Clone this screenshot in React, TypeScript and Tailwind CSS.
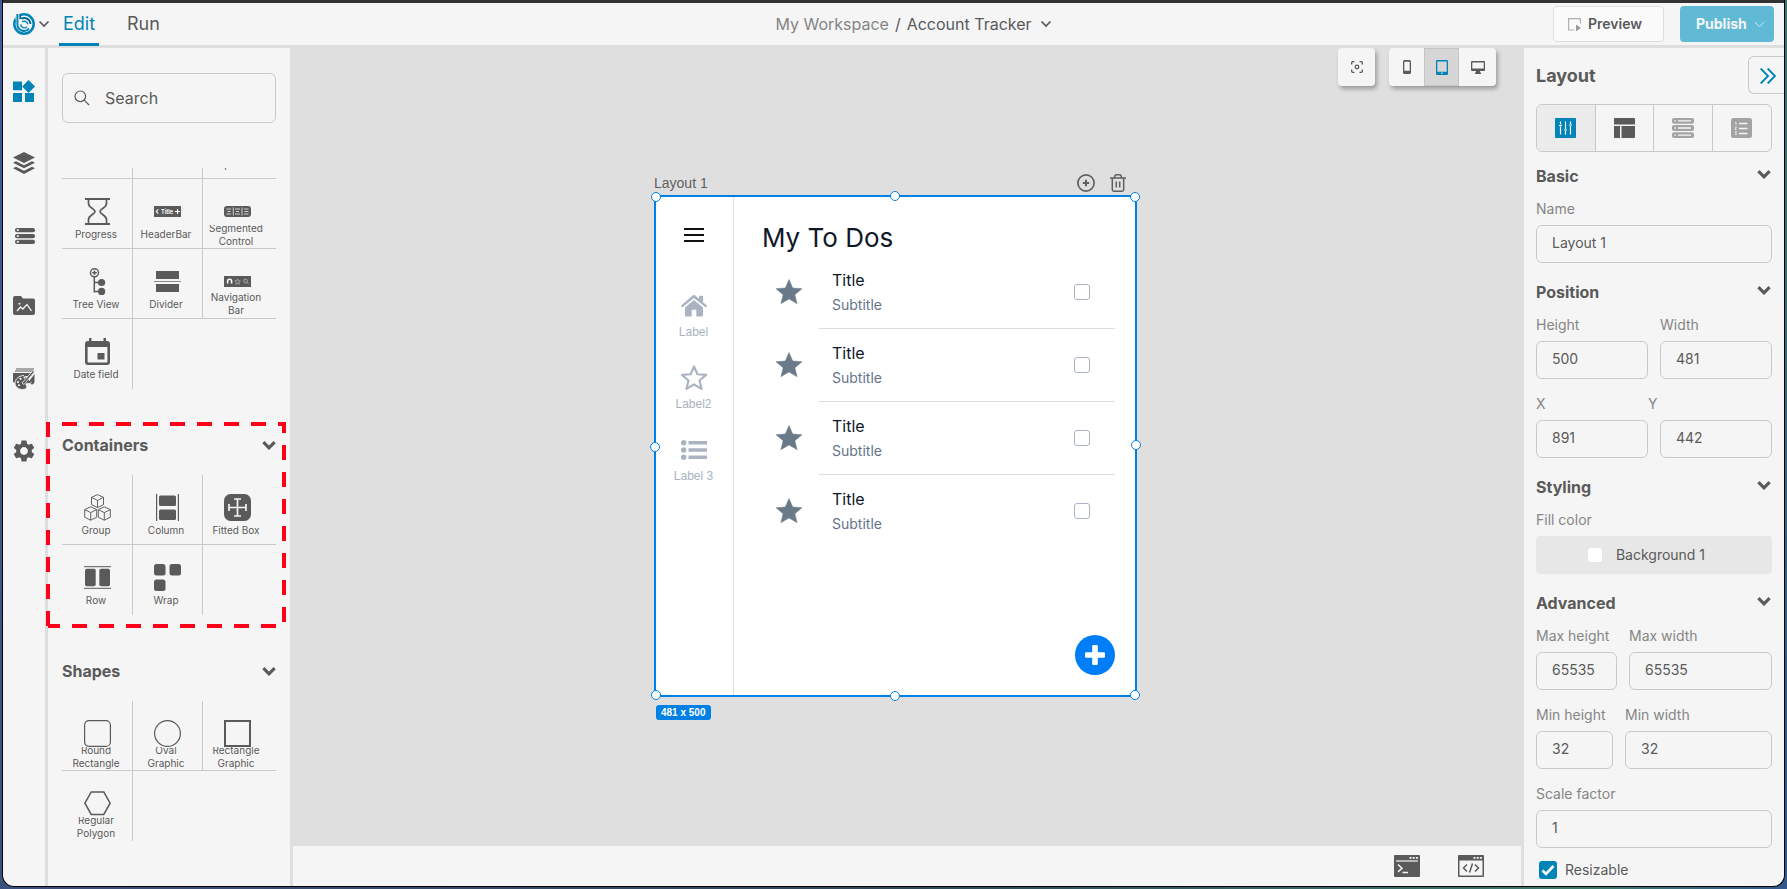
import type { ReactNode } from "react";
import { MdSettings } from "react-icons/md";

const INK = "#5a5a5a";

function BoldChevron() {
  return (
    <svg width="14" height="10" viewBox="0 0 14 10" fill="none" stroke={INK} strokeWidth="3.2" aria-hidden="true">
      <path d="M1.4 2.200 7 7.800l5.600-5.600" />
    </svg>
  );
}

function ThinChevron({ color = INK }: { color?: string }) {
  return (
    <svg width="12" height="8" viewBox="0 0 12 8" fill="none" stroke={color} strokeWidth="1.7" aria-hidden="true">
      <path d="M1.500 1.500 6 6l4.500-4.500" />
    </svg>
  );
}

function Glyph({ children }: { children: ReactNode }) {
  return (
    <svg width="27" height="27" viewBox="0 0 27 27" fill={INK} aria-hidden="true">
      {children}
    </svg>
  );
}

const glyphs: Record<string, ReactNode> = {
  progress: (
    <g fill="none" stroke={INK} strokeWidth="2">
      <path d="M1 1h25M1 26h25" />
      <path
        d="M4.5 2v3.5c0 4.500 6.500 5.200 6.500 8s-6.500 3.500-6.500 8V25M22.500 2v3.500c0 4.500-6.500 5.200-6.500 8s6.500 3.500 6.500 8V25"
        strokeWidth="1.700"
      />
    </g>
  ),
  header: (
    <>
      <rect y="8" width="27" height="11" />
      <path d="M4.300 11.300 2.200 13.500l2.100 2.200M21 13.500h5M23.500 11v5" stroke="#fff" fill="none" strokeWidth="1.100" />
      <text x="7" y="15.600" fontSize="5.500" fontWeight="700" fill="#fff">
        Title
      </text>
    </>
  ),
  segmented: (
    <>
      <rect y="8" width="27" height="11" rx="3" />
      <path
        d="M2.500 11h4.500M3.500 13.500h3M2.500 16h4.500M11 11h5M12 13.500h3M11 16h5M20 11h4.500M20.500 13.500h4M20 16h4.500M9.300 9.500v8M18 9.500v8"
        stroke="#ddd"
        strokeWidth=".9"
      />
    </>
  ),
  tree: (
    <>
      <circle cx="10.500" cy="4.800" r="4" fill="#fff" stroke={INK} strokeWidth="1.500" />
      <path d="M10.500 2.500v4.600M8.200 4.800h4.600M10.300 9v15.500M10.300 14.500H16M10.300 23.600H16" stroke={INK} strokeWidth="1.500" />
      <circle cx="17.600" cy="14.500" r="3.600" />
      <circle cx="17.600" cy="23.400" r="3.600" />
    </>
  ),
  divider: (
    <>
      <path d="M2 3h23v8H2zM2 16h23v8H2z" />
      <path d="M0 13h27v1H0z" opacity=".7" />
    </>
  ),
  navbar: (
    <>
      <rect y="8" width="27" height="11" />
      <path d="M3.600 15.500v-2.300a2 2 0 0 1 4 0v2.300" fill="none" stroke="#fff" strokeWidth="1.500" />
      <path d="m13.600 11 .8 1.800 2 .2-1.500 1.300.4 2-1.700-1-1.700 1 .4-2-1.500-1.300 2-.2z" fill="none" stroke="#ccc" strokeWidth=".6" />
      <circle cx="21.500" cy="13" r="1.800" fill="none" stroke="#ccc" strokeWidth=".7" />
      <path d="m22.800 14.300 1.800 1.800" stroke="#ccc" strokeWidth=".8" />
    </>
  ),
  date: (
    <>
      <path
        fillRule="evenodd"
        d="M5 0h2.500v3h12V0H22v3h1a3 3 0 0 1 3 3v18a3 3 0 0 1-3 3H4a3 3 0 0 1-3-3V6a3 3 0 0 1 3-3h1zM3.600 9v14.500c0 .6.300.9.900.9h18c.6 0 .9-.3.900-.9V9z"
      />
      <rect x="13.500" y="15" width="7" height="6.500" />
    </>
  ),
  group: (
    <g fill="none" stroke={INK} strokeWidth=".95" strokeLinejoin="round">
      <path d="m13.500.6 6 2.800v7.200l-6 3-6-3V3.400zM7.500 3.400l6 3 6-3M13.500 6.400v7.200" />
      <path d="m6.700 12.800 6 2.800v7.600l-6 3-6-3v-7.600zM.7 15.600l6 3 6-3M6.700 18.600v7.600" />
      <path d="m20.300 12.800 6 2.800v7.600l-6 3-6-3v-7.600zM14.300 15.600l6 3 6-3M20.300 18.600v7.600" />
    </g>
  ),
  column: (
    <>
      <path d="M2 0h1.200v27H2zM23.800 0H25v27h-1.200z" />
      <rect x="5" y="1.500" width="17" height="10.500" rx="1.500" />
      <rect x="5" y="15.500" width="17" height="10.500" rx="1.500" />
    </>
  ),
  fitted: (
    <>
      <rect width="27" height="27" rx="6.500" />
      <path d="M13.500 4.500v18M4.500 13.500h18M10 5h7M10 22h7M5 10v7M22 10v7" stroke="#f5f5f5" strokeWidth="1.700" />
    </>
  ),
  row: (
    <>
      <path d="M0 2h27v1.200H0zM0 23.800h27V25H0z" opacity=".8" />
      <rect x="1" y="4.800" width="10.700" height="17.500" rx="1.800" />
      <rect x="15.300" y="4.800" width="10.700" height="17.500" rx="1.800" />
    </>
  ),
  wrap: (
    <>
      <rect width="11.500" height="11.500" rx="2.500" />
      <rect x="15.500" width="11.500" height="11.500" rx="2.500" />
      <rect y="15.500" width="11.500" height="11.500" rx="2.500" />
    </>
  ),
  round: <rect x=".6" y=".6" width="25.800" height="25.800" rx="4.500" fill="none" stroke={INK} strokeWidth="1.200" />,
  oval: <circle cx="13.500" cy="13.500" r="12.900" fill="none" stroke={INK} strokeWidth="1.200" />,
  rect: <rect x="1" y="1" width="25" height="25" fill="none" stroke={INK} strokeWidth="2" />,
  polygon: <path d="M.9 13.200 7.200 2h12.600l6.300 11.200-6.300 11.200H7.200z" fill="none" stroke={INK} strokeWidth="1.500" />,
};

type Tool = { label: string; icon?: string; cut?: boolean };

const controls: Tool[] = [
  { label: "Checkbox" },
  { label: "Radio" },
  { label: "Spinner" },
  { label: "Progress", icon: "progress" },
  { label: "HeaderBar", icon: "header" },
  { label: "Segmented Control", icon: "segmented", cut: true },
  { label: "Tree View", icon: "tree" },
  { label: "Divider", icon: "divider" },
  { label: "Navigation Bar", icon: "navbar" },
  { label: "Date field", icon: "date" },
];

const containers: Tool[] = [
  { label: "Group", icon: "group" },
  { label: "Column", icon: "column" },
  { label: "Fitted Box", icon: "fitted" },
  { label: "Row", icon: "row" },
  { label: "Wrap", icon: "wrap" },
];

const shapes: Tool[] = [
  { label: "Round Rectangle", icon: "round", cut: true },
  { label: "Oval Graphic", icon: "oval", cut: true },
  { label: "Rectangle Graphic", icon: "rect", cut: true },
  { label: "Regular Polygon", icon: "polygon", cut: true },
];

function ToolGrid({ tools }: { tools: Tool[] }) {
  const rows: Tool[][] = [];
  for (let i = 0; i < tools.length; i += 3) rows.push(tools.slice(i, i + 3));
  return (
    <div>
      {rows.map((row, r) => (
        <div
          key={r}
          className={`grid h-[70px] grid-cols-[71px_70px_1fr] ${r < rows.length - 1 ? "border-b border-[#c9c9c9]" : ""}`}
        >
          {row.map((tool, c) => (
            <button key={tool.label} type="button" className={`flex items-start ${c < 2 ? "border-r border-[#c9c9c9]" : ""}`}>
              <span className={`flex flex-col items-center pt-[19px] ${c === 0 ? "w-[68px]" : "w-[66px]"}`}>
                <span className="h-[27px] pl-0.5">{tool.icon && <Glyph>{glyphs[tool.icon]}</Glyph>}</span>
                <span className={`flex h-[26px] w-[60px] items-center justify-center text-[10px] leading-[13px] ${tool.cut ? "-mt-[3px]" : "-mt-1"}`}>
                  <span className={tool.cut ? "[clip-path:inset(3px_0_0_0)]" : ""}>{tool.label}</span>
                </span>
              </span>
            </button>
          ))}
        </div>
      ))}
    </div>
  );
}

function PaletteSection({ title, tools }: { title: string; tools: Tool[] }) {
  return (
    <section className="mt-11">
      <h2 className="mb-[18px]">
        <button type="button" className="flex h-6 w-full items-center justify-between text-base font-bold">
          {title}
          <BoldChevron />
        </button>
      </h2>
      <ToolGrid tools={tools} />
    </section>
  );
}

function Logo() {
  return (
    <svg width="22" height="22" viewBox="0 0 22 22" fill="none" aria-hidden="true">
      <circle cx="11" cy="11" r="9.700" stroke="#0084b8" strokeWidth="2.500" />
      <path d="M2.500 0H8v7H2.500z" fill="#f5f5f5" />
      <path d="M4.400 1v10.300a6.600 6.600 0 0 0 11.600 4.300" stroke="#0084b8" strokeWidth="2" />
      <path d="M7.200.800V6" stroke="#006b96" strokeWidth="1.800" />
      <path d="M8.200 5.700c4.600-2 9 .7 9.300 5.300" stroke="#006b96" strokeWidth="1.800" />
      <path d="M9 8.700c3-1.300 5.300 0 5.800 2.600M7.600 11.500c.6 3.300 4.200 4.300 6.400 2.300" stroke="#0084b8" strokeWidth="1.400" />
    </svg>
  );
}

const railIcons: { name: string; art: ReactNode }[] = [
  {
    name: "Components",
    art: (
      <svg width="22" height="22" viewBox="0 0 22 22" fill="#0084b8">
        <path d="M0 1.500h9v8.800H0zM0 13h9v9H0zM12 13h9v9h-9zM15.500 0 22 6.500 15.500 13 9.200 6.500z" />
      </svg>
    ),
  },
  {
    name: "Layers",
    art: (
      <svg width="22" height="22" viewBox="0 0 22 22" fill={INK}>
        <path d="M11 0 22 5.500 11 11 0 5.500z" />
        <path d="m0 10.800 3-1.500 8 4 8-4 3 1.500-11 5.500z" />
        <path d="m0 16.300 3-1.500 8 4 8-4 3 1.500L11 22z" />
      </svg>
    ),
  },
  {
    name: "Data",
    art: (
      <svg width="22" height="18" viewBox="0 -2 22 18" fill={INK}>
        <rect x="2" width="20" height="4.300" rx="2" />
        <rect x="2" y="5.900" width="20" height="4.300" rx="2" />
        <rect x="2" y="11.700" width="20" height="4.300" rx="2" />
        <g fill="#f5f5f5">
          <circle cx="4.800" cy="2.100" r="1.100" />
          <circle cx="4.800" cy="8" r="1.100" />
          <circle cx="4.800" cy="13.800" r="1.100" />
        </g>
      </svg>
    ),
  },
  {
    name: "Media",
    art: (
      <svg width="22" height="22" viewBox="0 0 22 22" fill={INK}>
        <path d="M2 0h6l2 2.500h10a2 2 0 0 1 2 2V17a2 2 0 0 1-2 2H2a2 2 0 0 1-2-2V2a2 2 0 0 1 2-2z" />
        <path d="m4 15 3.500-4 2.300 2 4.200-4.500 4.500 6.500" fill="none" stroke="#f5f5f5" strokeWidth="1.300" />
        <circle cx="6.500" cy="7.700" r="1" fill="#f5f5f5" />
      </svg>
    ),
  },
  {
    name: "Themes",
    art: (
      <svg width="22" height="22" viewBox="0 0 22 22" fill={INK}>
        <path d="M3 1h18M2 3h18.500" stroke={INK} strokeWidth="1.100" />
        <path d="M0 5h19.500l-1 3H0zM0 8h6v9L0 14zM17 12l4.500-6v7c0 3-2 4-4 3z" />
        <path
          d="M11 7.500c-4.500 0-9 3.500-9 7.500s3.500 6.500 7.500 6.500c2.500 0 4.500-1 4.300-2.800-.2-1.500-1.300-1.700-.8-2.700.8-1.200 4 .5 5.500-1.500"
          stroke="#f5f5f5"
          strokeWidth=".9"
        />
        <path d="m9 15 11-12.500 1.500 1.200L11 16.500z" stroke="#f5f5f5" strokeWidth=".8" />
        <g fill="#f5f5f5">
          <circle cx="5" cy="14" r="1.100" />
          <circle cx="7.500" cy="10.800" r="1.100" />
          <circle cx="6" cy="17.300" r="1" />
          <circle cx="11.500" cy="9.600" r="1" />
        </g>
      </svg>
    ),
  },
  { name: "Settings", art: <MdSettings size={26} color={INK} /> },
];

function Caption({ id, className = "", children }: { id: string; className?: string; children: ReactNode }) {
  return (
    <label htmlFor={id} className={`mb-1.5 block h-5 text-sm whitespace-nowrap text-[#868686] ${className}`}>
      {children}
    </label>
  );
}

function Field({
  id,
  label,
  value,
  className = "",
  labelClass = "",
}: {
  id: string;
  label: string;
  value: string;
  className?: string;
  labelClass?: string;
}) {
  return (
    <div className={`min-w-0 ${className}`}>
      <Caption id={id} className={labelClass}>
        {label}
      </Caption>
      <input
        id={id}
        defaultValue={value}
        className="block h-[38px] w-full rounded-md border border-[#c9c9c9] bg-transparent px-[15px] pb-1 text-sm outline-none"
      />
    </div>
  );
}

function PropSection({ title, className = "mt-[17px]", children }: { title: string; className?: string; children: ReactNode }) {
  return (
    <section className={className}>
      <h3 className="mb-[11px]">
        <button type="button" className="flex h-6 w-full items-center justify-between text-base font-bold">
          {title}
          <span className="pr-px pb-1">
            <BoldChevron />
          </span>
        </button>
      </h3>
      <div className="flex flex-col gap-[15px]">{children}</div>
    </section>
  );
}

const STAR = "M13 0.500 16.700 9l9.300.7-7.100 6 2.200 9-8.100-4.800-8.100 4.800 2.200-9L0 9.700 9.300 9z";

const handles = [
  "-top-[5px] -left-[5px]",
  "-top-1.5 left-[234px]",
  "-top-[5px] -right-[5px]",
  "top-[245px] -left-1.5",
  "top-[243px] -right-1.5",
  "-bottom-[5px] -left-[5px]",
  "-bottom-1.5 left-[234px]",
  "-bottom-[5px] -right-[5px]",
];

function SideItem({ label, children }: { label: string; children: ReactNode }) {
  return (
    <a href="#" className="flex h-[72px] flex-col items-center font-['Liberation_Sans',sans-serif] text-xs leading-4 text-[#a9b3c1]">
      <span className="mb-0.5 flex h-8 items-center">{children}</span>
      {label}
    </a>
  );
}

function DesignFrame() {
  return (
    <div className="absolute top-[123px] left-[361px] w-[483px]">
      <div className="flex h-6 items-center justify-between pr-[11px] text-[#606060]">
        <span className="font-['Liberation_Sans',sans-serif] text-sm">Layout 1</span>
        <span className="flex gap-[15px]">
          <button type="button" aria-label="Add">
            <svg width="18" height="18" viewBox="0 0 18 18" fill="none" stroke="#606060" strokeWidth="1.700">
              <circle cx="9" cy="9" r="8.100" />
              <path d="M9 5.800v6.400M5.800 9h6.400" strokeWidth="2" />
            </svg>
          </button>
          <button type="button" aria-label="Delete">
            <svg width="16" height="18" viewBox="0 0 16 18" fill="none" stroke="#606060" strokeWidth="1.500">
              <path d="M0 4h16M2.300 4v11.500c0 1 .6 1.700 1.600 1.700h8.200c1 0 1.600-.7 1.600-1.700V4M4.500 3.800C4.500 1.500 5.500.8 6.500.8h3c1 0 2 .7 2 3M6.300 7.500v6M9.700 7.500v6" />
            </svg>
          </button>
        </span>
      </div>
      <div className="relative flex h-[502px] border-2 border-[#0080e5] bg-white">
        <nav className="flex w-[78px] flex-col border-r border-[#dedede] pt-[31px] pr-0.5">
          <button type="button" aria-label="Menu" className="mx-auto">
            <svg width="20" height="14" viewBox="0 0 20 14" fill="#111">
              <path d="M0 0h20v2H0zM0 6h20v2H0zM0 12h20v2H0z" />
            </svg>
          </button>
          <div className="mt-12">
            <SideItem label="Label">
              <svg width="26" height="22" viewBox="0 0 26 22" fill="#a9b3c1">
                <path d="M13 0c.5 0 .9.200 1.300.5L18 3.700V1.500c0-.5.300-.8.800-.8h2.500c.5 0 .8.300.8.800v5.700l3.500 3.100c.4.300.4.700.1 1.100l-.6.700c-.3.300-.7.300-1 0L13 3 1.900 12.100c-.3.300-.7.300-1 0l-.6-.7c-.3-.4-.3-.8.100-1.100L11.700.5c.4-.3.800-.5 1.300-.5z" />
                <path d="m13 5 9 7.500v7.700c0 .9-.5 1.300-1.300 1.300h-5.400v-6.700h-4.600v6.700H5.300c-.8 0-1.300-.4-1.300-1.300v-7.700z" />
              </svg>
            </SideItem>
            <SideItem label="Label2">
              <svg width="26" height="26" viewBox="-1 -1 28 28" fill="none" stroke="#a9b3c1" strokeWidth="2.300" strokeLinejoin="round">
                <path d={STAR} />
              </svg>
            </SideItem>
            <SideItem label="Label 3">
              <svg width="26" height="20" viewBox="0 0 26 20" fill="#a9b3c1">
                <circle cx="2.700" cy="2.700" r="2.700" />
                <circle cx="2.700" cy="10" r="2.700" />
                <circle cx="2.700" cy="17.300" r="2.700" />
                <path d="M7.500 1h18.500v3.500H7.500zM7.500 8.300h18.500v3.500H7.500zM7.500 15.500h18.500V19H7.500z" />
              </svg>
            </SideItem>
          </div>
        </nav>
        <div className="min-w-0 flex-1 pt-[25px] pr-5">
          <h1 className="pl-7 text-[26px] leading-8 text-[#0f172a]">My To Dos</h1>
          <ul className="mt-0.5">
            {[0, 1, 2, 3].map((i) => (
              <li key={i} className="flex h-[73px]">
                <span className="flex w-[85px] shrink-0 justify-end pt-[23px] pr-[17px]">
                  <svg width="26" height="26" viewBox="0 0 26 26" fill="#6b7a88">
                    <path d={STAR} stroke="#6b7a88" strokeWidth=".5" strokeLinejoin="round" />
                  </svg>
                </span>
                <label className={`flex flex-1 items-start justify-between pt-3 pr-[25px] pl-[13px] ${i < 3 ? "border-b border-[#dedede]" : ""}`}>
                  <span className="flex flex-col gap-px">
                    <span className="text-base leading-6 text-[#0f172a]">Title</span>
                    <span className="text-sm leading-6 text-[#64748b]">Subtitle</span>
                  </span>
                  <input type="checkbox" className="mt-4 size-4 appearance-none rounded-[3px] border border-[#a9b3c1] bg-white" />
                </label>
              </li>
            ))}
          </ul>
        </div>
        <button type="button" aria-label="Add to do" className="absolute right-5 bottom-5 flex size-10 items-center justify-center rounded-full bg-[#007ef7]">
          <svg width="20" height="20" viewBox="0 0 20 20" fill="#fff">
            <rect x="7.200" width="5.600" height="20" rx="1.200" />
            <rect y="7.200" width="20" height="5.600" rx="1.200" />
          </svg>
        </button>
        {handles.map((pos) => (
          <span key={pos} className={`absolute size-2.5 rounded-full border border-[#0080e5] bg-white ${pos}`} />
        ))}
      </div>
      <span className="mt-2 ml-0.5 inline-block h-[15px] rounded-[3px] bg-[#0080e5] px-[5px] font-['Liberation_Sans',sans-serif] text-[10px] leading-[15px] font-bold text-white">
        481 x 500
      </span>
    </div>
  );
}

function Header() {
  return (
    <header className="grid h-[45px] shrink-0 grid-cols-[1fr_auto_1fr] border-b-[3px] border-[#dedede]">
      <div className="flex pl-2.5">
        <button type="button" aria-label="Main menu" className="flex items-center gap-[3px]">
          <Logo />
          <ThinChevron />
        </button>
        <nav className="ml-[9px] flex gap-4 text-lg">
          <a href="#edit" className="-mb-px flex w-10 items-center justify-center border-b-[3px] border-[#0084b8] pt-0.5 text-[#0084b8]">
            Edit
          </a>
          <a href="#run" className="flex items-center px-3">
            Run
          </a>
        </nav>
      </div>
      <div className="flex items-center pl-10 text-base">
        <a href="#workspace" className="text-[#848484]">
          My Workspace
        </a>
        <span className="mx-1.5">/</span>
        <button type="button" className="flex items-center gap-2">
          Account Tracker
          <ThinChevron />
        </button>
      </div>
      <div className="flex items-center justify-end gap-4 pr-2.5 text-sm font-semibold">
        <button type="button" className="flex h-9 w-[111px] items-center gap-[7px] rounded border border-[#e0e0e0] bg-[#fafafa] pl-[14px]">
          <svg width="13" height="13" viewBox="0 0 13 13" fill="none" aria-hidden="true">
            <path d="M6.500 12H.6V.6h11.800v5" stroke="#b0b0b0" strokeWidth="1.200" />
            <path d="m8 6.500 5 3.500-5 3.300z" fill="#9a9a9a" />
          </svg>
          Preview
        </button>
        <button type="button" className="flex h-9 w-[94px] items-center gap-[7px] rounded bg-[#60bad6] pl-4 font-bold text-[#f5f5f5]">
          Publish
          <svg width="11" height="7" viewBox="0 0 11 7" fill="none" stroke="#c9e8f1" aria-hidden="true">
            <path d="m.7.8 4.800 5 4.800-5" />
          </svg>
        </button>
      </div>
    </header>
  );
}

function Palette() {
  return (
    <aside className="flex w-[245px] shrink-0 flex-col border-r-[3px] border-[#dedede] px-[14px] pt-[25px]">
      <label className="flex h-[50px] shrink-0 items-center gap-[15px] rounded-md border border-[#c9c9c9] pl-[11px]">
        <svg width="16" height="16" viewBox="0 0 16 16" fill="none" stroke={INK} strokeWidth="1.200" className="shrink-0" aria-hidden="true">
          <circle cx="6.300" cy="6.300" r="5.300" />
          <path d="m10.200 10.200 4.800 4.800" />
        </svg>
        <input
          type="search"
          aria-label="Search"
          placeholder="Search"
          className="w-full min-w-0 bg-transparent text-base outline-none placeholder:text-[#5a5a5a]"
        />
      </label>
      <div className="mt-[45px] min-h-0 flex-1 overflow-hidden">
        <div className="-mt-[59px]">
          <ToolGrid tools={controls} />
        </div>
        <PaletteSection title="Containers" tools={containers} />
        <PaletteSection title="Shapes" tools={shapes} />
      </div>
    </aside>
  );
}

function Toolbar() {
  const shadow = "shadow-[2px_3px_4px_rgba(0,0,0,0.3)]";
  return (
    <div className="flex justify-end gap-[14px] pr-7">
      <button type="button" aria-label="Center view" className={`flex h-[38px] w-[37px] items-center justify-center rounded bg-[#f5f5f5] ${shadow}`}>
        <svg width="12" height="12" viewBox="0 0 12 12" fill="none" stroke={INK} strokeWidth="1.300">
          <path d="M.7 3.500V1.700a1 1 0 0 1 1-1h1.800M8.500.7h1.800a1 1 0 0 1 1 1v1.800M11.300 8.500v1.800a1 1 0 0 1-1 1H8.500M3.500 11.300H1.700a1 1 0 0 1-1-1V8.500" />
          <circle cx="6" cy="6" r="1.800" />
        </svg>
      </button>
      <div className={`flex h-[38px] overflow-hidden rounded bg-[#f5f5f5] ${shadow}`}>
        <button type="button" aria-label="Phone" className="flex w-[35px] items-center justify-center">
          <svg width="8" height="14" viewBox="0 0 8 14" fill={INK}>
            <path fillRule="evenodd" d="M1.500 0h5A1.500 1.500 0 0 1 8 1.500v11A1.500 1.500 0 0 1 6.500 14h-5A1.500 1.500 0 0 1 0 12.500v-11A1.500 1.500 0 0 1 1.500 0zM1.300 1.800v9h5.400v-9z" />
          </svg>
        </button>
        <button type="button" aria-label="Tablet" aria-pressed="true" className="flex w-[35px] items-center justify-center border border-[#c4c4c4] bg-[#d6d6d6]">
          <svg width="12" height="15" viewBox="0 0 12 15" fill="#0084b8">
            <path fillRule="evenodd" d="M1.200 0h9.600A1.200 1.200 0 0 1 12 1.200v12.600a1.200 1.200 0 0 1-1.200 1.200H1.200A1.200 1.200 0 0 1 0 13.800V1.200A1.200 1.200 0 0 1 1.200 0zM1.300 1.500v10.300h9.400V1.500z" />
            <path d="M5.300 12.600h1.400v1.400H5.300z" fill="#d6d6d6" />
          </svg>
        </button>
        <button type="button" aria-label="Desktop" className="flex w-[37px] items-center justify-center">
          <svg width="14" height="13" viewBox="0 0 14 13" fill={INK}>
            <path fillRule="evenodd" d="M1 0h12a1 1 0 0 1 1 1v8a1 1 0 0 1-1 1H9v1.500h1V13H4v-1.500h1V10H1a1 1 0 0 1-1-1V1a1 1 0 0 1 1-1zM1.300 1.400v6h11.400v-6z" />
          </svg>
        </button>
      </div>
    </div>
  );
}

function BottomBar() {
  return (
    <footer className="flex h-10 shrink-0 items-center justify-end gap-[38px] border-r-[3px] border-[#dedede] bg-[#f5f5f5] pr-[37px]">
      <button type="button" aria-label="Console">
        <svg width="26" height="22" viewBox="0 0 26 22" fill={INK}>
          <rect width="26" height="22" rx="1" />
          <path d="M2 6h22" stroke="#f5f5f5" strokeWidth="1.200" />
          <path d="M15.500 2h2v1.700h-2zM18.700 2h2v1.700h-2zM21.900 2h2v1.700h-2z" fill="#f5f5f5" />
          <path d="m4 9.500 4 3.700-4 3.700M8.500 17.500h5.500" fill="none" stroke="#f5f5f5" strokeWidth="1.500" />
        </svg>
      </button>
      <button type="button" aria-label="Code">
        <svg width="26" height="22" viewBox="0 0 26 22" fill={INK}>
          <path fillRule="evenodd" d="M1 0h24a1 1 0 0 1 1 1v20a1 1 0 0 1-1 1H1a1 1 0 0 1-1-1V1a1 1 0 0 1 1-1zM1.500 5.500v15h23v-15z" />
          <path d="M15.500 2h2v1.700h-2zM18.700 2h2v1.700h-2zM21.900 2h2v1.700h-2z" fill="#f5f5f5" />
          <path d="M9 9.500 5.500 13 9 16.500M17 9.500l3.500 3.500-3.500 3.500M14.500 8.500l-3 9" fill="none" stroke={INK} strokeWidth="1.500" />
        </svg>
      </button>
    </footer>
  );
}

function Inspector() {
  return (
    <aside className="w-[260px] shrink-0 overflow-hidden px-3 pt-2">
      <div className="flex h-[38px] items-center justify-between">
        <h2 className="pt-0.5 text-lg font-bold">Layout</h2>
        <button type="button" aria-label="Collapse panel" className="-mr-3 flex h-[38px] w-9 items-center rounded-l-md border border-r-0 border-[#c9c9c9] pt-0.5 pl-[11px]">
          <svg width="16" height="16" viewBox="0 0 16 16" fill="none" stroke="#0084b8" strokeWidth="1.900">
            <path d="m.7.5 7.300 7.500-7.300 7.500M7.700.5 15 8l-7.300 7.500" />
          </svg>
        </button>
      </div>
      <div className="mt-2.5 grid h-12 grid-cols-4 divide-x divide-[#c9c9c9] overflow-hidden rounded-md border border-[#c9c9c9]">
        <button type="button" aria-label="Properties" className="flex items-center justify-center bg-[#ebebeb]">
          <svg width="21" height="20" viewBox="0 0 21 20" fill="#0084b8">
            <rect width="21" height="20" rx="1" />
            <path
              d="M5.500 3.500v3M5.500 8.500v8M10.500 3.500v7.500M10.500 13v3.500M15.500 3.500v2.500M15.500 8v8.500M4 7.500h3M9 12h3M14 7h3"
              stroke="#fff"
              strokeWidth="1.200"
            />
          </svg>
        </button>
        <button type="button" aria-label="Template" className="flex items-center justify-center">
          <svg width="21" height="20" viewBox="0 0 21 20" fill={INK}>
            <path d="M0 1a1 1 0 0 1 1-1h19a1 1 0 0 1 1 1v5.500H0zM0 8h6v12H1a1 1 0 0 1-1-1zM7.500 8H21v11a1 1 0 0 1-1 1H7.500z" />
          </svg>
        </button>
        <button type="button" aria-label="Data" className="flex items-center justify-center">
          <svg width="22" height="20" viewBox="0 0 22 20" fill="#a3a3a3">
            <rect width="22" height="5.800" rx="2" />
            <rect y="7.100" width="22" height="5.800" rx="2" />
            <rect y="14.200" width="22" height="5.800" rx="2" />
            <path d="M2.500 2.900h1.500M6 2.900h13M2.500 10h1.500M6 10h13M2.500 17.100h1.500M6 17.100h13" stroke="#f5f5f5" strokeWidth="1.400" />
          </svg>
        </button>
        <button type="button" aria-label="Actions" className="flex items-center justify-center">
          <svg width="21" height="20" viewBox="0 0 21 20" fill="#a3a3a3">
            <rect width="21" height="20" rx="2.500" />
            <path d="M8 5.500h8.500M8 10.500h8.500M8 15.500h8.500" stroke="#f5f5f5" strokeWidth="1.400" />
            <path d="M4 4.300h1v3M3.800 9.300h1.700l-1.700 2.200h1.900M3.800 13.800h1.700l-.8 1.300.8 1.300H3.800" fill="none" stroke="#f5f5f5" strokeWidth=".8" />
          </svg>
        </button>
      </div>

      <PropSection title="Basic" className="mt-3">
        <Field id="name" label="Name" value="Layout 1" />
      </PropSection>
      <PropSection title="Position">
        <div className="flex gap-3">
          <Field id="height" label="Height" value="500" className="flex-1" />
          <Field id="width" label="Width" value="481" className="flex-1" />
        </div>
        <div className="flex gap-3">
          <Field id="x" label="X" value="891" className="flex-1" />
          <Field id="y" label="Y" value="442" className="flex-1" labelClass="-ml-3" />
        </div>
      </PropSection>
      <PropSection title="Styling">
        <div>
          <Caption id="fill">Fill color</Caption>
          <button id="fill" type="button" className="flex h-[38px] w-full items-center justify-center gap-[14px] rounded bg-[#e7e7e7] pr-[15px] text-sm">
            <span className="size-[14px] rounded-[3px] bg-white" />
            Background 1
          </button>
        </div>
      </PropSection>
      <PropSection title="Advanced">
        <div className="flex gap-3">
          <Field id="max-height" label="Max height" value="65535" className="w-[81px]" />
          <Field id="max-width" label="Max width" value="65535" className="flex-1" />
        </div>
        <div className="flex gap-3">
          <Field id="min-height" label="Min height" value="32" className="w-[77px]" />
          <Field id="min-width" label="Min width" value="32" className="flex-1" />
        </div>
        <Field id="scale" label="Scale factor" value="1" />
      </PropSection>
      <label className="mt-3 ml-[3px] flex items-center gap-2 text-sm">
        <span className="grid">
          <input type="checkbox" defaultChecked className="col-start-1 row-start-1 size-[18px] appearance-none rounded-[3px] bg-[#0084b8]" />
          <svg width="18" height="18" viewBox="0 0 18 18" fill="none" stroke="#fff" strokeWidth="2.600" className="pointer-events-none col-start-1 row-start-1">
            <path d="m3.500 9.500 3.500 3.500 7.500-8" />
          </svg>
        </span>
        Resizable
      </label>
    </aside>
  );
}

export default function App() {
  return (
    <div className="flex h-screen flex-col bg-[linear-gradient(100deg,#3f5f9c_0%,#3b4f7a_10%,#2f4858_55%,#3f7a6c_90%,#33588c_100%)] px-0.5 pb-0.5 font-['Inter',sans-serif] text-[#5a5a5a]">
      <div className="flex min-h-0 flex-1 flex-col overflow-hidden rounded-b-xl border border-t-0 border-black bg-[#f5f5f5]">
        <div className="h-[3px] shrink-0 bg-[#333]" />
        <Header />
        <div className="flex min-h-0 flex-1">
          <nav className="flex w-[45px] shrink-0 flex-col border-r-[3px] border-[#dedede] pt-[7px]">
            {railIcons.map((item) => (
              <button key={item.name} type="button" aria-label={item.name} className="flex h-[72px] w-full items-center justify-center">
                {item.art}
              </button>
            ))}
          </nav>
          <Palette />
          <main className="flex min-w-0 flex-1 flex-col">
            <div className="relative min-h-0 flex-1 overflow-hidden bg-[#dfdfdf]">
              <Toolbar />
              <DesignFrame />
            </div>
            <BottomBar />
          </main>
          <Inspector />
        </div>
      </div>
      <svg className="pointer-events-none absolute top-[422px] left-[46px]" width="240" height="206" viewBox="0 0 240 206" fill="none" stroke="#ff0018" strokeWidth="4" strokeDasharray="15 12" aria-hidden="true">
        <path d="M16 2H238V204H2M2 0V206" />
      </svg>
    </div>
  );
}
